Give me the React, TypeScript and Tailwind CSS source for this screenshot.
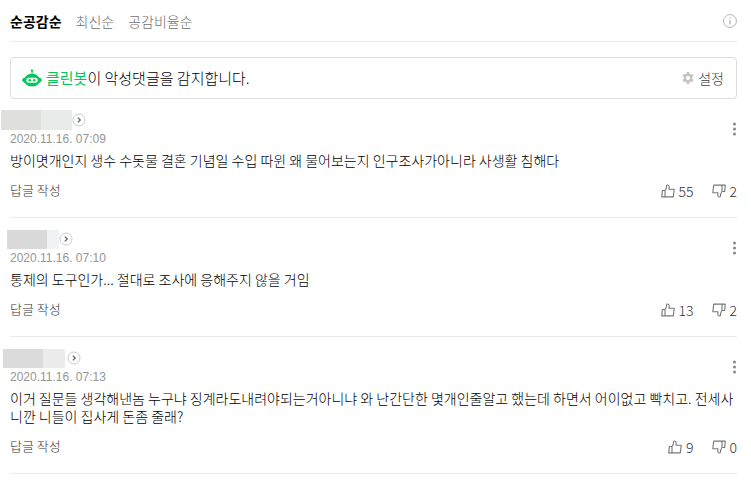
import { clsx } from 'clsx'

type Comment = {
  id: number
  date: string
  text: string
  likes: number
  dislikes: number
  mask: string
  maskLeft: string
  maskRight: string
}

const tabs = ['순공감순', '최신순', '공감비율순']

const comments: Comment[] = [
  {
    id: 1,
    date: '2020.11.16. 07:09',
    text: '방이몃개인지 생수 수돗물 결혼 기념일 수입 따윈 왜 물어보는지 인구조사가아니라 사생활 침해다',
    likes: 55,
    dislikes: 2,
    mask: '-ml-[9px] h-5',
    maskLeft: 'w-10 bg-[#dfdfdd]',
    maskRight: 'w-[31px] bg-[#e9ebea]',
  },
  {
    id: 2,
    date: '2020.11.16. 07:10',
    text: '통제의 도구인가... 절대로 조사에 응해주지 않을 거임',
    likes: 13,
    dislikes: 2,
    mask: '-ml-[3px] h-[19px]',
    maskLeft: 'w-10 bg-[#d9d9d9]',
    maskRight: 'w-3 bg-[#f1f2f4]',
  },
  {
    id: 3,
    date: '2020.11.16. 07:13',
    text: '이거 질문들 생각해낸놈 누구냐 징계라도내려야되는거아니냐 와 난간단한 몇개인줄알고 했는데 하면서 어이없고 빡치고. 전세사니깐 니들이 집사게 돈좀 줄래?',
    likes: 9,
    dislikes: 0,
    mask: '-ml-[7px] mr-[2px] h-[19px]',
    maskLeft: 'w-10 bg-[#dbdbdb]',
    maskRight: 'w-[22px] bg-[#ececec]',
  },
]

export default function App() {
  return (
    <div className="min-h-screen bg-white pl-[10px] pr-[14px] font-['Noto_Sans_CJK_KR',sans-serif] text-sm font-light text-black">
      <header className="flex h-[42px] items-center justify-between border-b border-[#ebebeb]">
        <nav className="flex gap-[14px]">
          {tabs.map((tab, i) => (
            <button
              key={tab}
              type="button"
              className={clsx('leading-5', i === 0 ? 'font-bold text-black' : 'text-[#707070]')}
            >
              {tab}
            </button>
          ))}
        </nav>
        <button type="button" aria-label="안내">
          <InfoIcon />
        </button>
      </header>

      <section className="mt-[15px] flex h-[42px] items-center justify-between rounded border border-[#dcdcdc] pl-[11px] pr-3">
        <p className="flex items-center gap-1 text-[15px] leading-5">
          <BotIcon />
          <span>
            <a href="#cleanbot" className="font-normal text-[#03c75a]">클린봇</a>이 악성댓글을 감지합니다.
          </span>
        </p>
        <button type="button" className="flex items-center gap-1 leading-5 text-[#404040]">
          <GearIcon />
          설정
        </button>
      </section>

      <ul>
        {comments.map((comment) => (
          <CommentItem key={comment.id} comment={comment} />
        ))}
      </ul>
    </div>
  )
}

function CommentItem({ comment }: { comment: Comment }) {
  return (
    <li className="border-b border-[#ebebeb] pb-4 pt-[11px]">
      <div className="flex items-center justify-between">
        <div>
          <div className="flex h-5 items-center">
            <span className={clsx('flex', comment.mask)}>
              <span className={comment.maskLeft} />
              <span className={comment.maskRight} />
            </span>
            <button type="button" aria-label="프로필">
              <ArrowIcon />
            </button>
          </div>
          <time className="mt-px block font-['Liberation_Sans',sans-serif] text-xs font-normal text-[#969696]">{comment.date}</time>
        </div>
        <button type="button" aria-label="더보기">
          <MoreIcon />
        </button>
      </div>

      <p className="mt-1 break-all leading-[18px]">{comment.text}</p>

      <div className="mt-3 flex items-start justify-between text-[#333333]">
        <button type="button" className="text-[13px] leading-[18px]">답글 작성</button>
        <div className="flex gap-[18px] leading-5">
          <button type="button" aria-label="공감" className="flex items-center gap-1">
            <ThumbIcon />
            {comment.likes}
          </button>
          <button type="button" aria-label="비공감" className="flex items-center gap-1">
            <ThumbIcon down />
            {comment.dislikes}
          </button>
        </div>
      </div>
    </li>
  )
}

function ThumbIcon({ down = false }: { down?: boolean }) {
  return (
    <svg className={clsx('h-[14px] w-[14px]', down && 'rotate-180')} viewBox="0 0 14 14" fill="none" stroke="#777777" strokeWidth="1.1" strokeLinejoin="round">
      <path d="M1.300 6.500h2.700v6.400H.8zM4 6.500C5.200 5.200 5.600 3.500 5.700 1.200c1.500-.5 2.600.3 2.500 1.800L8 5.200h5.200l-.9 7.700H4" />
    </svg>
  )
}

function InfoIcon() {
  return (
    <svg className="h-[14px] w-[14px]" viewBox="0 0 14 14" fill="none" stroke="#b4b4b4">
      <circle cx="7" cy="7" r="6.4" />
      <path d="M7 3.500v1.200M7 6v4.500" strokeWidth="1.200" />
    </svg>
  )
}

function ArrowIcon() {
  return (
    <svg className="h-[14px] w-[14px]" viewBox="0 0 14 14" fill="none">
      <circle cx="7" cy="7" r="6" stroke="#cccccc" />
      <path d="M5.8 4.6 8.2 7 5.8 9.4" stroke="#666666" strokeWidth="1.3" />
    </svg>
  )
}

function MoreIcon() {
  return (
    <svg className="h-[14px] w-[6px]" viewBox="0 0 6 14" fill="#888888">
      <circle cx="3.500" cy="2" r="1.5" />
      <circle cx="3.500" cy="7" r="1.5" />
      <circle cx="3.500" cy="12" r="1.5" />
    </svg>
  )
}

function GearIcon() {
  return (
    <svg className="h-3 w-3" viewBox="0 0 12 12">
      <path
        fill="#c4c4c4"
        fillRule="evenodd"
        d="M4.7 0h2.600l.3 1.700 1 .6 1.600-.6 1.300 2.200-1.300 1.100v1.900l1.300 1.100-1.300 2.300-1.600-.7-1 .6L7.300 12H4.700l-.3-1.800-1-.6-1.600.7L.5 8l1.300-1.100V5L.5 3.900l1.300-2.200 1.600.6 1-.6zM6 4a2 2 0 1 0 0 4 2 2 0 0 0 0-4z"
      />
    </svg>
  )
}

function BotIcon() {
  return (
    <svg className="h-[18px] w-5" viewBox="0 0 20 18" fill="#03c75a">
      <circle cx="10" cy="1.600" r="1.200" />
      <path d="M9.500 2h1v4h-1z" />
      <path d="M10 4.800c3.600 0 5.800 1.500 7 3.600 1.500.2 2.800 1.200 2.800 2.600s-1.300 2.600-2.800 3c-1.400 2.300-4 3.600-7 3.600s-5.600-1.300-7-3.600C1.500 13.600.2 12.400.2 11S1.500 8.600 3 8.400c1.200-2.100 3.400-3.600 7-3.600z" />
      <rect x="4.300" y="8.800" width="11.400" height="5" rx="2.500" fill="white" />
      <circle cx="7.800" cy="11.300" r="1.300" />
      <circle cx="12.200" cy="11.300" r="1.300" />
    </svg>
  )
}
